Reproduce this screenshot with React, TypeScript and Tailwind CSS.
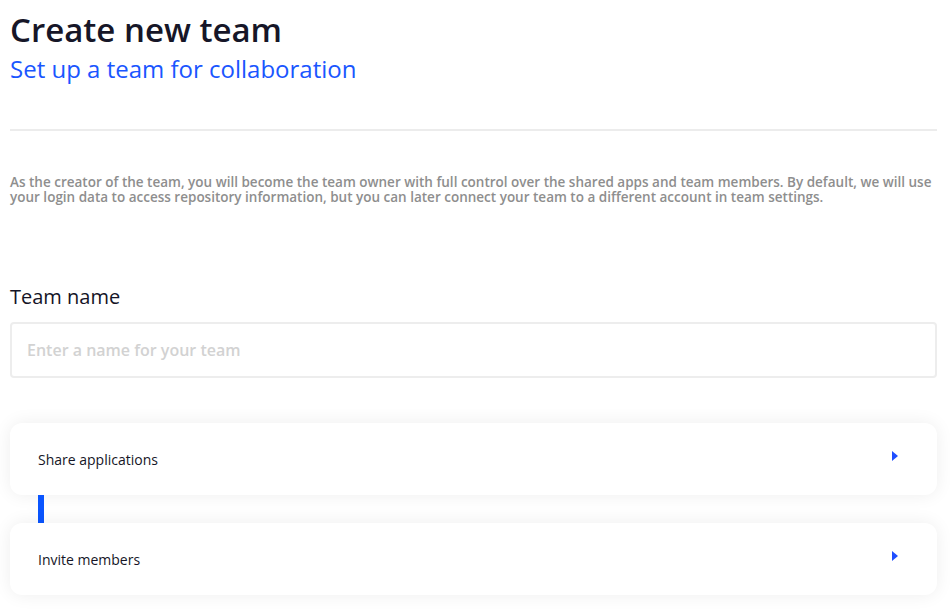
import React from "react";

const Arrow = () => (
  <svg width="6" height="10" viewBox="0 0 6 10" className="mb-[6px] text-[#1f4fff]">
    <path d="M0 0 L6 5 L0 10 Z" fill="currentColor" />
  </svg>
);

const StepCard = ({ label }: { label: string }) => (
  <div className="flex h-[72px] items-center justify-between rounded-xl bg-white pl-7 pr-[39px] shadow-[0_0_18px_rgba(0,0,0,0.07)]">
    <span className="text-[14px] font-medium text-[#151526]">{label}</span>
    <Arrow />
  </div>
);

export default function App() {
  return (
    <div className="min-h-screen bg-white font-['Open_Sans',sans-serif]">
      <div className="px-[10px] pr-[13px]">
        <h1 className="pt-[7px] text-[33px] leading-[45px] font-semibold text-[#161628]">
          Create new team
        </h1>
        <h2 className="text-[24px] leading-[33px] font-medium text-[#1a56ff]">
          Set up a team for collaboration
        </h2>
        <hr className="mt-[44px] border-t-2 border-[#ececec]" />
        <p className="mt-[44px] text-[13.5px] leading-[15px] font-semibold text-[#8e8e8e]">
          As the creator of the team, you will become the team owner with full
          control over the shared apps and team members. By default, we will use
          your login data to access repository information, but you can later
          connect your team to a different account in team settings.
        </p>
        <label className="mt-[80px] block text-[20px] leading-[24px] font-medium text-[#141426]">
          Team name
        </label>
        <input
          type="text"
          placeholder="Enter a name for your team"
          className="mt-[13px] block h-[56px] w-full rounded-[4px] border-2 border-[#ededed] px-[15px] text-[16px] font-semibold outline-none placeholder:text-[#d2d2d2]"
        />
        <div className="mt-[45px]">
          <StepCard label="Share applications" />
          <div className="ml-[28px] h-[28px] w-[6px] bg-[#0a55ff]" />
          <StepCard label="Invite members" />
        </div>
      </div>
    </div>
  );
}
